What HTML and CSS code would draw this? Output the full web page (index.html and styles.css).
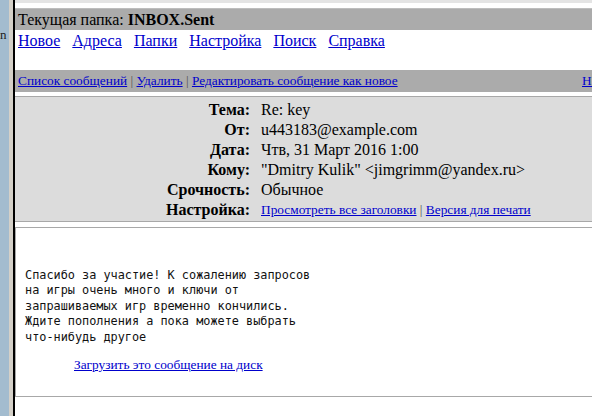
FILE: index.html
```html
<!DOCTYPE html>
<html lang="ru">
<head>
  <meta charset="UTF-8" />
  <title>INBOX.Sent - Re: key</title>
  <link rel="stylesheet" href="styles.css">
</head>
<body>

  <div class="screen">

    <!-- левый фрейм (папки), почти скрыт -->
    <div class="left-frame"><span class="cut-text">n</span></div>
    <div class="splitter"></div>

    <!-- правый фрейм: просмотр письма -->
    <main class="mail-frame">

      <div class="folder-bar">Текущая папка: <b>INBOX.Sent</b></div>

      <nav class="menu">
        <a href="#">Новое</a>
        <a href="#">Адреса</a>
        <a href="#">Папки</a>
        <a href="#">Настройка</a>
        <a href="#">Поиск</a>
        <a href="#">Справка</a>
      </nav>

      <div class="actions">
        <div class="actions-left">
          <a href="#">Список сообщений</a> <span class="sep">|</span>
          <a href="#">Удалить</a> <span class="sep">|</span>
          <a href="#">Редактировать сообщение как новое</a>
        </div>
        <a href="#">Назад</a>
      </div>

      <div class="headers">
        <div class="label">Тема:</div>
        <div class="value">Re: key</div>
        <div class="label">От:</div>
        <div class="value">u443183@example.com</div>
        <div class="label">Дата:</div>
        <div class="value">Чтв, 31 Март 2016 1:00</div>
        <div class="label">Кому:</div>
        <div class="value">"Dmitry Kulik" &lt;jimgrimm@yandex.ru&gt;</div>
        <div class="label">Срочность:</div>
        <div class="value">Обычное</div>
        <div class="label">Настройка:</div>
        <div class="value small-links">
          <a href="#">Просмотреть все заголовки</a> <span class="sep">|</span>
          <a href="#">Версия для печати</a>
        </div>
      </div>

      <div class="message">
<pre class="message-text">Спасибо за участие! К сожалению запросов
на игры очень много и ключи от
запрашиваемых игр временно кончились.
Ждите пополнения а пока можете выбрать
что-нибудь другое</pre>
        <a href="#" class="download">Загрузить это сообщение на диск</a>
      </div>

    </main>
  </div>

</body>
</html>
```

FILE: styles.css
```css
html, body {
  margin: 0;
  padding: 0;
  height: 100%;
  overflow: hidden;
  background-color: #ffffff;
  color: #000000;
  font-family: 'Liberation Serif', 'Times New Roman', serif;
  font-size: 16px;
}
a {
  color: #0000cc;
  text-decoration: underline;
}
.screen {
  display: flex;
  height: 416px;
}
.left-frame {
  width: 9px;
  flex-shrink: 0;
  background-color: #a3bccf;
  overflow: hidden;
  text-align: right;
  font-size: 13px;
  line-height: 15px;
  color: #222;
}
.cut-text {
  display: block;
  padding: 27px 3px 0 0;
}
.splitter {
  width: 4px;
  flex-shrink: 0;
  background-color: #d4d0c8;
  border-right: 2px solid #000000;
}
.mail-frame {
  flex-grow: 1;
  min-width: 0;
  overflow: hidden;
  border-top: 3px solid #e4e4e4;
}
.folder-bar {
  margin-top: 5px;
  border-top: 1px solid #bdbdbd;
  background-color: #ababab;
  height: 21px;
  line-height: 21px;
  padding-left: 3px;
  white-space: nowrap;
}
.menu {
  display: flex;
  gap: 12px;
  height: 40px;
  padding: 2px 0 0 3px;
  box-sizing: border-box;
  line-height: 18px;
  white-space: nowrap;
}
.actions {
  display: grid;
  grid-template-columns: 564px auto;
  background-color: #ababab;
  height: 22px;
  line-height: 22px;
  padding-left: 3px;
  font-size: 10pt;
  white-space: nowrap;
}
.sep {
  color: #555555;
}
.headers {
  display: grid;
  grid-template-columns: 235px 1fr;
  column-gap: 11px;
  margin-top: 4px;
  border-top: 1px solid #a8a8a8;
  border-bottom: 1px solid #a8a8a8;
  background-color: #dcdcdc;
  padding: 3px 0 1px;
  white-space: nowrap;
}
.label {
  text-align: right;
  font-weight: bold;
  line-height: 20px;
}
.value {
  line-height: 20px;
}
.small-links {
  font-size: 10pt;
}
.message {
  margin-top: 5px;
  border: 1px solid #a8a8a8;
  border-right: none;
  height: 170px;
  padding: 40px 0 0 9px;
  box-sizing: border-box;
}
.message-text {
  margin: 0;
  font-family: 'DejaVu Sans Mono', monospace;
  font-size: 11.85px;
  line-height: 15.4px;
  color: #111;
}
.download {
  display: inline-block;
  margin: 12px 0 0 49px;
  font-size: 10pt;
}
```
